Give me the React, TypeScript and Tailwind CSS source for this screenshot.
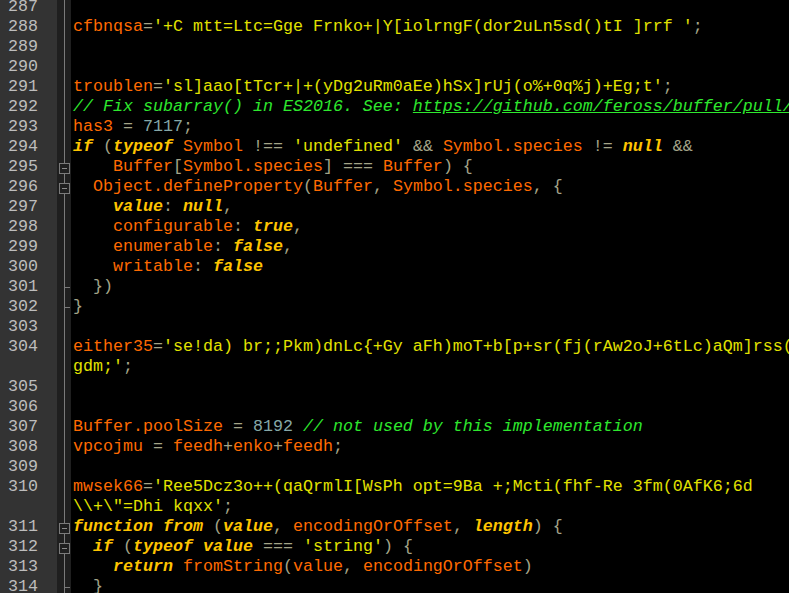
type Tok = [string, string];

const ID = "text-[#ff6a00]";
const STR = "text-[#e2e200]";
const OP = "text-[#a4a488]";
const KW = "text-[#ffc400] font-bold italic";
const NUM = "text-[#86a8a8]";
const CM = "text-[#2ee82e] italic";
const URL = "text-[#2ee82e] italic underline";

interface Row {
  n?: string;
  fold?: "box" | "tick";
  toks: Tok[];
}

const rows: Row[] = [
  { n: "287", toks: [] },
  {
    n: "288",
    toks: [
      ["cfbnqsa", ID],
      ["=", OP],
      ["'+C mtt=Ltc=Gge Frnko+|Y[iolrngF(dor2uLn5sd()tI ]rrf '", STR],
      [";", OP],
    ],
  },
  { n: "289", toks: [] },
  { n: "290", toks: [] },
  {
    n: "291",
    toks: [
      ["troublen", ID],
      ["=", OP],
      ["'sl]aao[tTcr+|+(yDg2uRm0aEe)hSx]rUj(o%+0q%j)+Eg;t'", STR],
      [";", OP],
    ],
  },
  {
    n: "292",
    toks: [
      ["// Fix subarray() in ES2016. See: ", CM],
      ["https://github.com/feross/buffer/pull/97", URL],
    ],
  },
  {
    n: "293",
    toks: [
      ["has3 ", ID],
      ["= ", OP],
      ["7117", NUM],
      [";", OP],
    ],
  },
  {
    n: "294",
    toks: [
      ["if", KW],
      [" (", OP],
      ["typeof", KW],
      [" Symbol ", ID],
      ["!== ", OP],
      ["'undefined'", STR],
      [" && ", OP],
      ["Symbol.species ", ID],
      ["!= ", OP],
      ["null", KW],
      [" &&", OP],
    ],
  },
  {
    n: "295",
    fold: "box",
    toks: [
      ["    Buffer", ID],
      ["[", OP],
      ["Symbol.species", ID],
      ["] === ", OP],
      ["Buffer", ID],
      [") {", OP],
    ],
  },
  {
    n: "296",
    fold: "box",
    toks: [
      ["  Object.defineProperty", ID],
      ["(", OP],
      ["Buffer", ID],
      [", ", OP],
      ["Symbol.species", ID],
      [", {", OP],
    ],
  },
  {
    n: "297",
    toks: [
      ["    ", OP],
      ["value", KW],
      [": ", OP],
      ["null", KW],
      [",", OP],
    ],
  },
  {
    n: "298",
    toks: [
      ["    configurable", ID],
      [": ", OP],
      ["true", KW],
      [",", OP],
    ],
  },
  {
    n: "299",
    toks: [
      ["    enumerable", ID],
      [": ", OP],
      ["false", KW],
      [",", OP],
    ],
  },
  {
    n: "300",
    toks: [
      ["    writable", ID],
      [": ", OP],
      ["false", KW],
    ],
  },
  { n: "301", fold: "tick", toks: [["  })", OP]] },
  { n: "302", fold: "tick", toks: [["}", OP]] },
  { n: "303", toks: [] },
  {
    n: "304",
    toks: [
      ["either35", ID],
      ["=", OP],
      ["'se!da) br;;Pkm)dnLc{+Gy aFh)moT+b[p+sr(fj(rAw2oJ+6tLc)aQm]rss(kf", STR],
    ],
  },
  {
    toks: [
      ["gdm;'", STR],
      [";", OP],
    ],
  },
  { n: "305", toks: [] },
  { n: "306", toks: [] },
  {
    n: "307",
    toks: [
      ["Buffer.poolSize ", ID],
      ["= ", OP],
      ["8192", NUM],
      [" // not used by this implementation", CM],
    ],
  },
  {
    n: "308",
    toks: [
      ["vpcojmu ", ID],
      ["= ", OP],
      ["feedh", ID],
      ["+", OP],
      ["enko", ID],
      ["+", OP],
      ["feedh", ID],
      [";", OP],
    ],
  },
  { n: "309", toks: [] },
  {
    n: "310",
    toks: [
      ["mwsek66", ID],
      ["=", OP],
      ["'Ree5Dcz3o++(qaQrmlI[WsPh opt=9Ba +;Mcti(fhf-Re 3fm(0AfK6;6d", STR],
    ],
  },
  {
    toks: [
      ["\\\\+\\\"=Dhi kqxx'", STR],
      [";", OP],
    ],
  },
  {
    n: "311",
    fold: "box",
    toks: [
      ["function", KW],
      [" ", OP],
      ["from", KW],
      [" (", OP],
      ["value", KW],
      [", ", OP],
      ["encodingOrOffset", ID],
      [", ", OP],
      ["length", KW],
      [") {", OP],
    ],
  },
  {
    n: "312",
    fold: "box",
    toks: [
      ["  ", OP],
      ["if", KW],
      [" (", OP],
      ["typeof", KW],
      [" ", OP],
      ["value", KW],
      [" === ", OP],
      ["'string'", STR],
      [") {", OP],
    ],
  },
  {
    n: "313",
    toks: [
      ["    ", OP],
      ["return", KW],
      [" fromString", ID],
      ["(", OP],
      ["value", ID],
      [", ", OP],
      ["encodingOrOffset", ID],
      [")", OP],
    ],
  },
  { n: "314", fold: "tick", toks: [["  }", OP]] },
];

function Fold({ kind }: { kind?: "box" | "tick" }) {
  return (
    <div className="relative h-full w-[14px] shrink-0 bg-[#1f1f1f]">
      <div className="absolute left-[7px] top-0 h-full w-px bg-[#7a7a7a]" />
      {kind === "box" && (
        <div className="absolute left-[2px] top-[6px] flex h-[11px] w-[11px] items-center justify-center border border-[#7a7a7a] bg-[#1f1f1f]">
          <div className="h-px w-[5px] bg-[#8a8a8a]" />
        </div>
      )}
      {kind === "tick" && (
        <div className="absolute left-[7px] top-[10px] h-px w-[6px] bg-[#7a7a7a]" />
      )}
    </div>
  );
}

export default function App() {
  return (
    <div
      className="h-[593px] w-[789px] overflow-hidden bg-black text-[16.67px] leading-[20px]"
      style={{ fontFamily: '"Liberation Mono", "Courier New", monospace' }}
    >
      <div className="-mt-[3px] flex flex-col">
        {rows.map((r, i) => (
          <div key={i} className="flex h-[20px] items-stretch">
            <div className="w-[57px] shrink-0 bg-[#333333] pl-[8px] text-[#bdbdbd]">
              {r.n ?? ""}
            </div>
            <Fold kind={r.fold} />
            <div className="whitespace-pre pl-[2px]">
              {r.toks.map(([t, c], j) => (
                <span key={j} className={c}>
                  {t}
                </span>
              ))}
            </div>
          </div>
        ))}
      </div>
    </div>
  );
}
